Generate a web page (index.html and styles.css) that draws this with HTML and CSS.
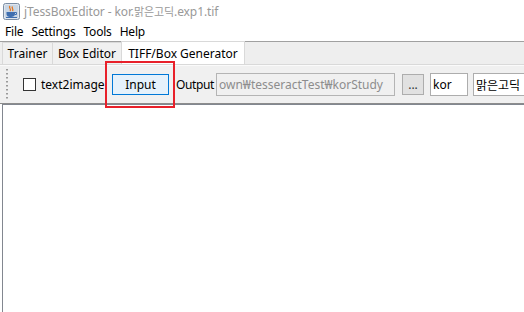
FILE: index.html
```html
<!DOCTYPE html>
<html>
<head>
<meta charset="utf-8">
<link rel="stylesheet" href="styles.css">
</head>
<body>
<div class="window">
  <div class="titlebar">
    <svg class="appicon" width="17" height="17" viewBox="0 0 17 17">
      <rect x="0.5" y="0.5" width="16" height="16" rx="2" fill="#dfe6ee" stroke="#7b8da3"/>
      <rect x="2" y="2" width="13" height="13" fill="#c9d6e4"/>
      <path d="M7 3 C5 5 9 6 7 8 M9.5 3.5 C8 5 11 6 9.5 8" stroke="#e8751a" stroke-width="1.3" fill="none"/>
      <path d="M3.5 9 H12 V11 C12 13 10 14 8 14 H7 C5 14 3.5 13 3.5 11 Z" fill="#3f6fb0"/>
      <path d="M12 9.5 H13.5 V11.5 H12" stroke="#3f6fb0" fill="none"/>
      <rect x="3" y="14" width="11" height="1" fill="#3f6fb0"/>
    </svg>
    <span class="title">jTessBoxEditor - kor.<span class="ko">맑은고딕</span>.exp1.tif</span>
  </div>
  <div class="menubar">
    <span class="menu">File</span>
    <span class="menu">Settings</span>
    <span class="menu">Tools</span>
    <span class="menu">Help</span>
  </div>
  <div class="tabs">
    <div class="tab t1">Trainer</div>
    <div class="tab t2">Box Editor</div>
    <div class="tab t3 selected">TIFF/Box Generator</div>
  </div>
  <div class="toolbar">
    <div class="grip"></div>
    <label class="check"><span class="box"></span><span class="checktext">text2image</span></label>
    <div class="btnwrap"><button class="btn primary">Input</button></div>
    <span class="label">Output</span>
    <div class="field disabled output">own₩tesseractTest₩korStudy</div>
    <button class="btn small">...</button>
    <div class="field lang">kor</div>
    <div class="field fontname">맑은고딕</div>
  </div>
  <div class="content"></div>
</div>
</body>
</html>
```
FILE: styles.css
```css
* { box-sizing: border-box; }
html, body { margin: 0; padding: 0; }
body {
  width: 524px;
  height: 312px;
  overflow: hidden;
  background: #ffffff;
  font-family: "Noto Sans", "Noto Sans CJK KR", sans-serif;
  font-size: 12px;
  color: #000;
}
.window { display: flex; flex-direction: column; height: 312px; }
.titlebar {
  height: 22px;
  display: flex;
  align-items: center;
  padding-left: 3px;
  gap: 4px;
  background: #fff;
}
.appicon { display: block; }
.title { color: #999999; font-size: 12px; letter-spacing: -0.1px; }
.ko { font-size: 11px; }
.menubar {
  height: 19px;
  display: flex;
  align-items: center;
  padding-left: 5px;
  gap: 8px;
  background: #fff;
  letter-spacing: -0.2px;
}
.tabs {
  height: 24px;
  display: flex;
  align-items: flex-end;
  padding-left: 2px;
  background: #eeeeee;
  border-top: 1px solid #a0a0a0;
  border-bottom: 1px solid #d9d9d9;
}
.tab {
  height: 22px;
  display: flex;
  align-items: center;
  justify-content: center;
  background: #f0f0f0;
  border: 1px solid #d9d9d9;
  border-bottom: none;
  margin-right: -1px;
  white-space: nowrap;
}
.t1 { width: 51px; }
.t2 { width: 70px; }
.t3 { width: 124px; }
.tab.selected {
  background: #ffffff;
  height: 23px;
}
.toolbar {
  height: 39px;
  display: flex;
  align-items: center;
  background: #f0f0f0;
  padding-left: 6px;
  border-top: 1px solid #fafafa;
  border-bottom: 1px solid #8c8c8c;
}
.toolbar > * { flex-shrink: 0; }
.grip {
  width: 2px;
  height: 32px;
  background: repeating-linear-gradient(to bottom, #9a9a9a 0 1px, #c4c4c4 1px 2px, transparent 2px 4px);
  margin-right: 15px;
}
.check { display: flex; align-items: center; gap: 5px; }
.checktext { width: 63px; white-space: nowrap; }
.box {
  width: 13px;
  height: 13px;
  border: 1px solid #333;
  background: #fff;
}
.btnwrap { position: relative; margin-left: 8px; }
.btnwrap::after {
  content: "";
  position: absolute;
  left: -7px;
  right: -6px;
  top: -13px;
  bottom: -13px;
  border: 2px solid #e8202a;
  pointer-events: none;
}
.btn {
  font-family: inherit;
  font-size: 12px;
  margin: 0;
  padding: 0;
  display: flex;
  align-items: center;
  justify-content: center;
  color: #000;
}
.btn.primary {
  width: 57px;
  height: 21px;
  background: #e5f1fb;
  border: 1px solid #0078d7;
}
.label { margin-left: 7px; width: 38px; white-space: nowrap; letter-spacing: -0.4px; }
.field {
  height: 23px;
  border: 1px solid #adadad;
  background: #fff;
  display: flex;
  align-items: center;
  padding-left: 2px;
  white-space: nowrap;
  overflow: hidden;
}
.field.disabled { background: #f0f0f0; color: #8d8d8d; border-color: #b4b4b4; }
.output { width: 179px; margin-left: 2px; }
.btn.small {
  width: 22px;
  height: 21px;
  margin-left: 7px;
  background: #e1e1e1;
  border: 1px solid #adadad;
  color: #333;
}
.lang { width: 38px; margin-left: 6px; }
.fontname { width: 60px; margin-left: 5px; }
.content {
  flex: 1;
  margin-left: 2px;
  border-top: 1px solid #828790;
  border-left: 1px solid #828790;
  background: #fff;
}
```
